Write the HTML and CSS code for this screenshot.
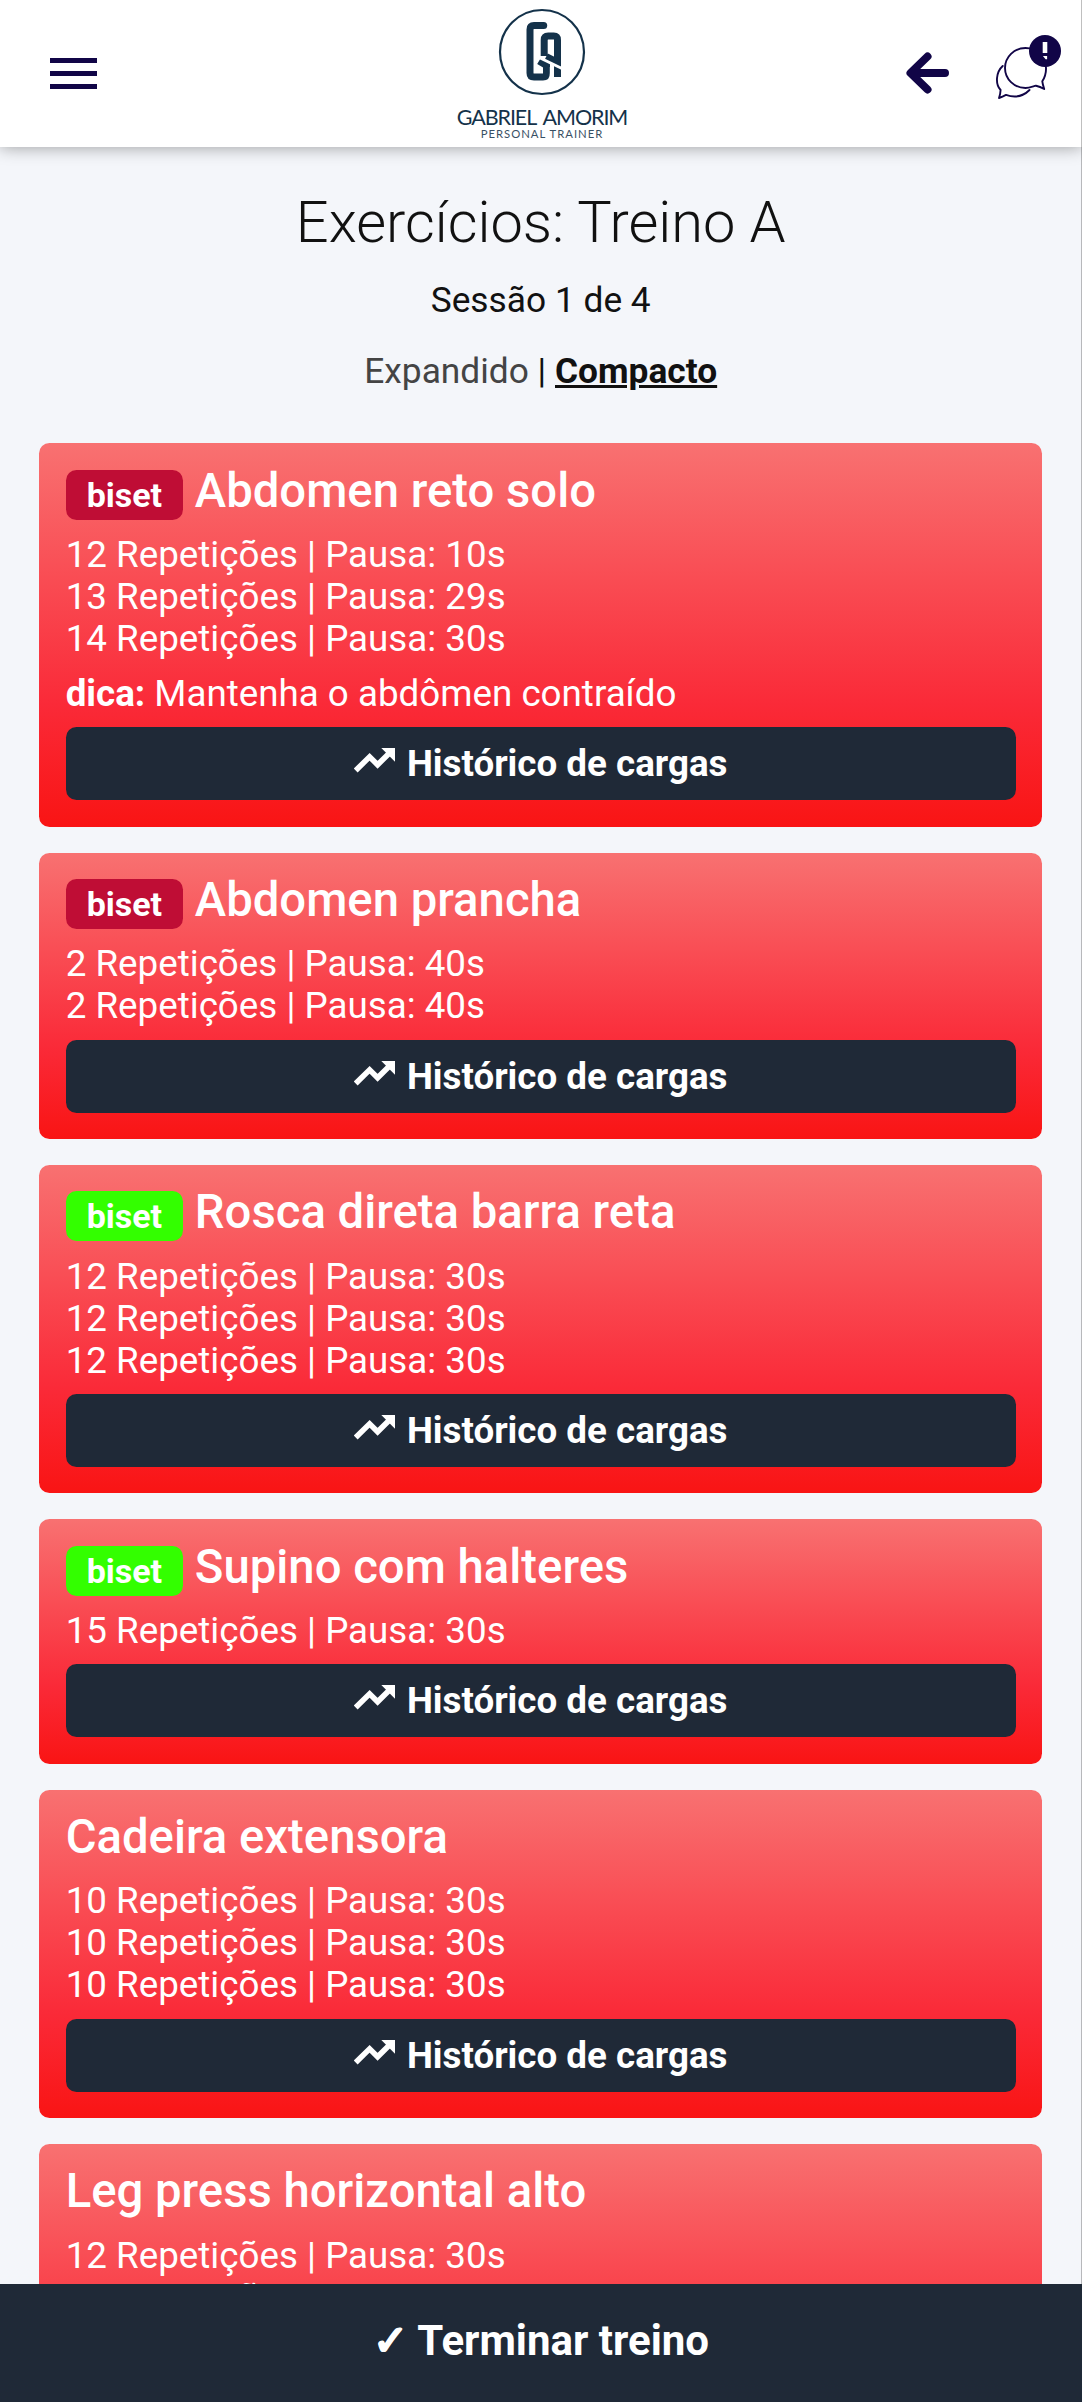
FILE: index.html
```html
<!DOCTYPE html>
<html lang="pt-BR">
<head>
    <meta charset="UTF-8">
    <meta name="viewport" content="width=device-width, initial-scale=1.0">
    <title>Exercícios: Treino A</title>
    <link rel="stylesheet" href="styles.css">
</head>
<body>

<svg class="sprite" width="0" height="0">
    <symbol id="trend" viewBox="0 0 41 25">
        <path d="M1.700 22.500L15.600 8.800l8 8L36 4.500" fill="none" stroke="#fff" stroke-width="5.500"/>
        <path d="M27.300 0H41v13.700z" fill="#fff"/>
    </symbol>
</svg>

<header class="topbar">
    <button class="menu-btn" aria-label="Menu">
        <span></span>
        <span></span>
        <span></span>
    </button>

    <div class="logo">
        <svg class="logo-mark" viewBox="0 0 88 88">
            <circle cx="44" cy="44" r="42" fill="none" stroke="#14324a" stroke-width="2.2"/>
            <path d="M46 17.500H36q-4 0-4 4V65q0 4 4 4h9q3.500 0 3.500-4V57.500L41 53" fill="none" stroke="#14324a" stroke-width="7" stroke-linecap="butt"/>
            <circle cx="45.700" cy="17.500" r="3.500" fill="#14324a"/>
            <path d="M46.200 48V32q0-4 4-4h5.600q3.700 0 3.700 4V69" fill="none" stroke="#14324a" stroke-width="7"/>
            <path d="M48 49l12 6" stroke="#14324a" stroke-width="8"/>
            <path d="M38 48l26 12.500" stroke="#fff" stroke-width="3"/>
            <path d="M53.800 59v15" stroke="#fff" stroke-width="4"/>
        </svg>
        <div class="logo-name">GABRIEL AMORIM</div>
        <div class="logo-sub">PERSONAL TRAINER</div>
    </div>

    <div class="actions">
        <svg class="back" viewBox="0 0 44 42">
            <path d="M21.500 4.500L4.500 21l17 16.500M5 21h34" fill="none" stroke="#110547" stroke-width="8" stroke-linecap="round" stroke-linejoin="round"/>
        </svg>
        <div class="chat">
            <svg class="chat-icon" viewBox="0 0 52 52" fill="none" stroke="#110547" stroke-width="1.900" stroke-linejoin="round" stroke-linecap="round">
                <path d="M46.300 34.300C49 30 50.200 26 50 21A20.500 20 0 1 0 29.500 41C33 41 36 39.800 40 38.700Q44 39.500 48.200 42Q46.600 37 46.300 34.300Z"/>
                <path d="M6.700 19C0 25 -1 37 4.600 43Q4.400 47 3 51Q6.500 49.800 10 47.900C19 51 27 49.500 33.500 43"/>
            </svg>
            <svg class="chat-badge" viewBox="0 0 32 32">
                <circle cx="16" cy="16" r="16" fill="#110547"/>
                <path d="M13.700 7h4.600v11h-4.600z" fill="#fff"/>
                <path d="M13.900 21h4.200v3.200h-1.500z" fill="#fff"/>
            </svg>
        </div>
    </div>
</header>

<main class="content">
    <h1>Exercícios: Treino A</h1>
    <p class="session">Sessão 1 de 4</p>
    <p class="view-mode"><a class="mode">Expandido</a> | <a class="mode active">Compacto</a></p>

    <section class="card">
        <h2><span class="badge crimson">biset</span> Abdomen reto solo</h2>
        <div class="series">
            <div>12 Repetições | Pausa: 10s</div>
            <div>13 Repetições | Pausa: 29s</div>
            <div>14 Repetições | Pausa: 30s</div>
        </div>
        <p class="tip"><b>dica:</b> Mantenha o abdômen contraído</p>
        <button class="history-btn"><svg><use href="#trend"/></svg>Histórico de cargas</button>
    </section>

    <section class="card">
        <h2><span class="badge crimson">biset</span> Abdomen prancha</h2>
        <div class="series">
            <div>2 Repetições | Pausa: 40s</div>
            <div>2 Repetições | Pausa: 40s</div>
        </div>
        <button class="history-btn"><svg><use href="#trend"/></svg>Histórico de cargas</button>
    </section>

    <section class="card">
        <h2><span class="badge green">biset</span> Rosca direta barra reta</h2>
        <div class="series">
            <div>12 Repetições | Pausa: 30s</div>
            <div>12 Repetições | Pausa: 30s</div>
            <div>12 Repetições | Pausa: 30s</div>
        </div>
        <button class="history-btn"><svg><use href="#trend"/></svg>Histórico de cargas</button>
    </section>

    <section class="card">
        <h2><span class="badge green">biset</span> Supino com halteres</h2>
        <div class="series">
            <div>15 Repetições | Pausa: 30s</div>
        </div>
        <button class="history-btn"><svg><use href="#trend"/></svg>Histórico de cargas</button>
    </section>

    <section class="card">
        <h2>Cadeira extensora</h2>
        <div class="series">
            <div>10 Repetições | Pausa: 30s</div>
            <div>10 Repetições | Pausa: 30s</div>
            <div>10 Repetições | Pausa: 30s</div>
        </div>
        <button class="history-btn"><svg><use href="#trend"/></svg>Histórico de cargas</button>
    </section>

    <section class="card">
        <h2>Leg press horizontal alto</h2>
        <div class="series">
            <div>12 Repetições | Pausa: 30s</div>
            <div>12 Repetições | Pausa: 30s</div>
        </div>
    </section>
</main>

<button class="finish-btn"><span class="check">✓</span> Terminar treino</button>

</body>
</html>
```

FILE: styles.css
```css
* {
    box-sizing: border-box;
}

body {
    margin: 0;
    height: 100vh;
    display: flex;
    flex-direction: column;
    overflow: hidden;
    background-color: #f4f6fa;
    font-family: Roboto, sans-serif;
    font-size: 36.75px;
    line-height: 42px;
    color: #111;
}

/* thin line of the scroll track */
body::after {
    content: "";
    position: fixed;
    top: 0;
    right: 0;
    width: 1px;
    height: 100%;
    background-color: rgba(0, 0, 0, 0.25);
    z-index: 1;
}

h1, h2, p {
    margin: 0;
}

button {
    border: none;
    font-family: inherit;
    cursor: pointer;
}

.sprite {
    position: absolute;
}

/* header */
.topbar {
    flex: none;
    display: grid;
    grid-template-columns: 1fr 180px 1fr;
    height: 147px;
    background-color: #fff;
    box-shadow: 0 0 16px rgba(0, 0, 0, 0.38);
}

.menu-btn {
    display: flex;
    flex-direction: column;
    gap: 7.3px;
    align-self: center;
    width: 47px;
    margin-left: 50px;
    padding: 0;
    background: none;
}

.menu-btn span {
    height: 5.7px;
    background-color: #110547;
}

.logo {
    display: flex;
    flex-direction: column;
    align-items: center;
    padding: 8px 0 0 2px;
    color: #14324a;
    white-space: nowrap;
}

.logo-mark {
    width: 88px;
    height: 88px;
}

.logo-name {
    margin-top: 10px;
    font-family: Lato, sans-serif;
    font-size: 21.5px;
    line-height: 22px;
    letter-spacing: -1.1px;
    word-spacing: 3.5px;
}

.logo-sub {
    font-family: Lato, sans-serif;
    font-size: 11.3px;
    line-height: 12px;
    letter-spacing: 1px;
    opacity: 0.85;
}

.actions {
    display: flex;
    justify-content: flex-end;
    padding-right: 21px;
}

.back {
    width: 44px;
    height: 42px;
    margin: 52px 46px 0 0;
}

.chat {
    position: relative;
    width: 65px;
    margin-top: 35px;
}

.chat-icon {
    display: block;
    width: 52px;
    height: 52px;
    margin-top: 12px;
}

.chat-badge {
    position: absolute;
    top: 0;
    right: 0;
    width: 32px;
    height: 32px;
}

/* content */
.content {
    flex: 1;
    min-height: 0;
    overflow: hidden;
    padding: 39px 40px 0 39.4px;
}

h1 {
    font-size: 57.75px;
    font-weight: 300;
    line-height: 72px;
    text-align: center;
}

.session, .view-mode {
    font-size: 35.3px;
    text-align: center;
}

.session {
    margin-top: 20.5px;
}

.view-mode {
    margin: 29.5px 0 51.4px;
}

.mode {
    color: #444;
}

.mode.active {
    color: #111;
    font-weight: bold;
    text-decoration: underline;
}

/* cards */
.card {
    margin-bottom: 26.25px;
    padding: 26.25px;
    border-radius: 10.5px;
    background: linear-gradient(#f87171, #fa2a38 68%, #f91414);
    color: #fff;
}

.card:last-child {
    height: 328px;
}

.card h2 {
    height: 50.4px;
    margin-bottom: 13.9px;
    font-size: 47.25px;
    font-weight: 500;
    line-height: 43px;
    white-space: nowrap;
}

.badge {
    display: inline-block;
    height: 50px;
    padding: 0 21px;
    border-radius: 10.5px;
    font-size: 34px;
    font-weight: bold;
    line-height: 50px;
}

.crimson {
    background-color: #bf0d35;
}

.green {
    background-color: #33ff00;
}

.tip {
    margin-top: 13.1px;
}

.history-btn {
    display: flex;
    justify-content: center;
    align-items: center;
    gap: 12px;
    width: 100%;
    height: 73px;
    margin-top: 12.3px;
    padding: 0;
    border-radius: 10.5px;
    background-color: #1f2937;
    color: #fff;
    font-size: 36.75px;
    font-weight: bold;
}

.history-btn svg {
    width: 41px;
    height: 25px;
    margin-bottom: 6px;
}

.finish-btn {
    flex: none;
    height: 118px;
    padding-bottom: 6px;
    background-color: #1f2937;
    color: #fff;
    font-size: 42px;
    font-weight: bold;
    z-index: 2;
}

.check {
    -webkit-text-stroke: 1px #fff;
}
```
